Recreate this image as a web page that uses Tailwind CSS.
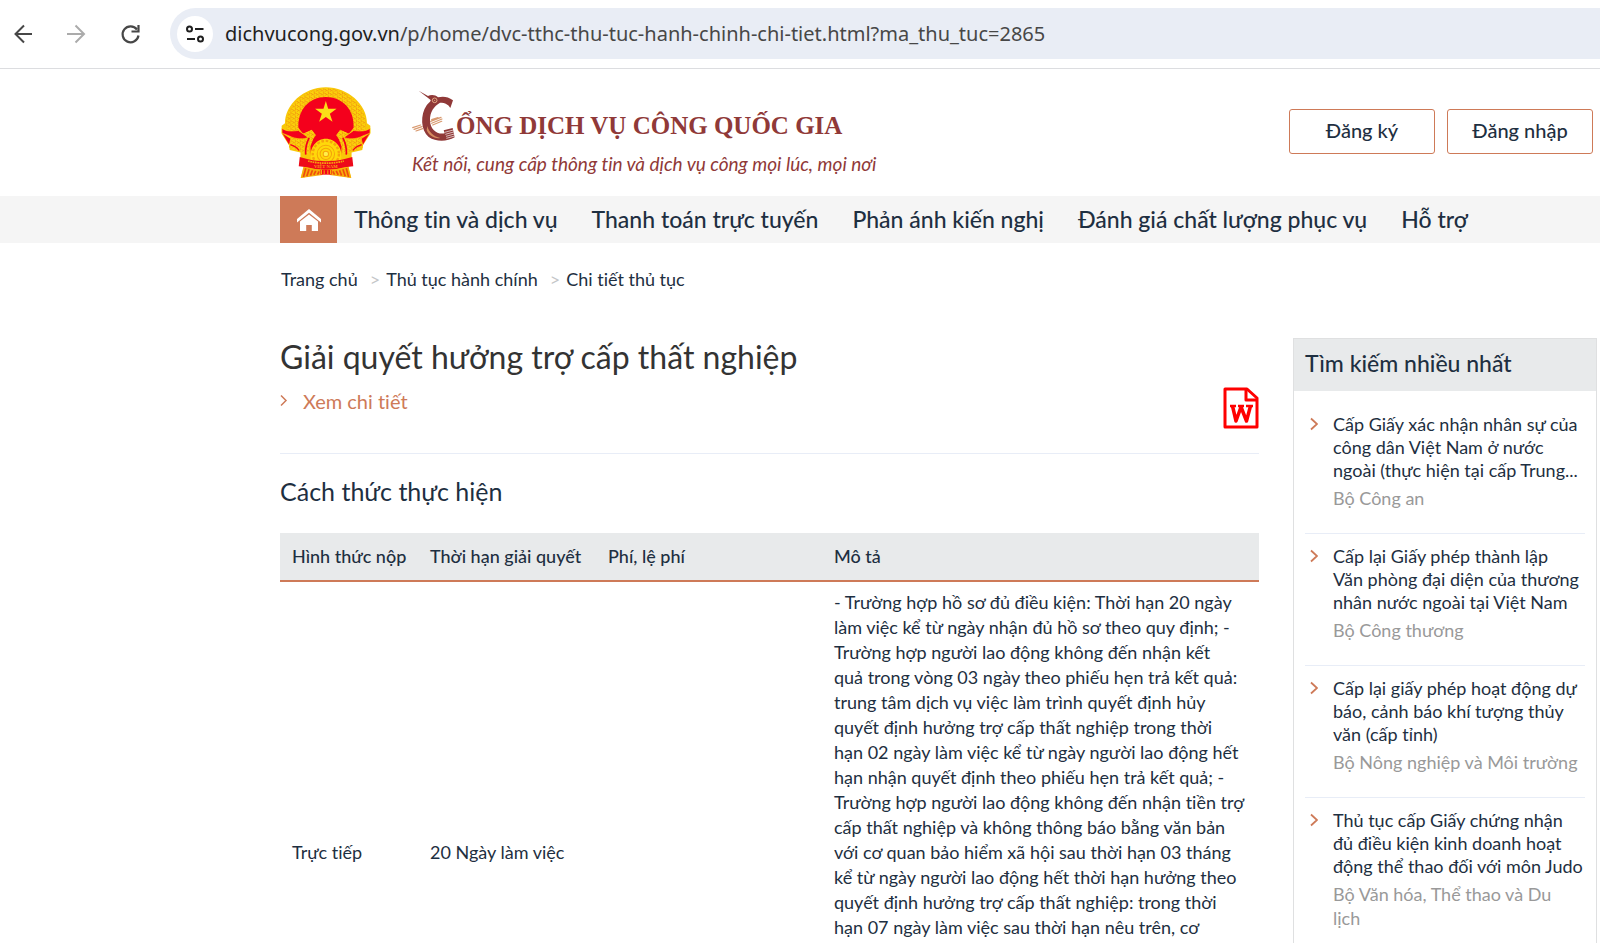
<!DOCTYPE html>
<html lang="vi">
<head>
  <meta charset="UTF-8">
  <meta name="viewport" content="width=device-width, initial-scale=1.0">
  <script src="https://cdn.jsdelivr.net/npm/@tailwindcss/browser@4"></script>
  <title>Cổng Dịch vụ công Quốc gia</title>
</head>
<body class="bg-white text-[#1e2f41] font-['Lato','Noto_Sans',sans-serif] text-[18px] [font-variant-ligatures:none] overflow-x-hidden">

  <!-- Browser bar -->
  <div class="flex items-center h-[69px] pt-2 pb-[9px] pl-3 border-b border-[#dcdde0]">
    <button aria-label="Back" class="w-6 h-6 mr-7">
      <svg viewBox="0 0 24 24" class="w-6 h-6" fill="none" stroke="#474747" stroke-width="2"><path d="M20 12H4M12 3.500L3.500 12L12 20.500"/></svg>
    </button>
    <button aria-label="Forward" class="w-6 h-6 mr-[30px]">
      <svg viewBox="0 0 24 24" class="w-6 h-6" fill="none" stroke="#ababab" stroke-width="2"><path d="M3 12H19M11.500 3.500L20 12L11.500 20.500"/></svg>
    </button>
    <button aria-label="Reload" class="w-6 h-6 mr-7">
      <svg viewBox="0 0 24 24" class="w-6 h-6" fill="none" stroke="#474747" stroke-width="2.200"><path d="M19 7.500A8 8 0 1 0 20.500 13.500"/><path d="M20.500 3V9.500H13.500"/></svg>
    </button>
    <div class="flex flex-1 items-center h-[51px] pl-[7px] rounded-l-full bg-[#e9edf5]">
      <button aria-label="Site information" class="flex items-center justify-center w-9 h-9 rounded-full bg-white">
        <svg viewBox="0 0 20 18" class="w-5 h-[18px]" fill="none" stroke="#1f1f1f" stroke-width="2"><circle cx="4.500" cy="4" r="2.500"/><path d="M10 4H18.500M2 14H10"/><circle cx="15.500" cy="14" r="2.500"/></svg>
      </button>
      <p class="ml-3 font-['Noto_Sans',sans-serif] text-[20px] text-[#474747] whitespace-nowrap"><span class="text-[#1f1f1f]">dichvucong.gov.vn</span>/p/home/dvc-tthc-thu-tuc-hanh-chinh-chi-tiet.html?ma_thu_tuc=2865</p>
    </div>
  </div>

  <!-- Header -->
  <header class="flex items-center h-[127px] pl-[281px] pr-[7px]">
    <svg viewBox="8 8 269 275" class="w-[90px] h-[92px] shrink-0" role="img" aria-label="Quốc huy Việt Nam">
      <defs>
        <pattern id="grain" width="14" height="12" patternUnits="userSpaceOnUse">
          <rect width="14" height="12" fill="#fbd50a"/>
          <path d="M0 3L5 6L0 9M7 0L12 3L7 6M7 9L12 11" stroke="#ee7d10" stroke-width="2" fill="none"/>
        </pattern>
      </defs>
      <path d="M142 9C75 9 20 62 20 116L10 124V148L32 182L34 196L66 204V224L76 242L67 280L142 264L218 280L209 242L219 224V204L251 196L253 182L275 148V124L265 116C265 62 209 9 142 9Z" fill="#f8c808"/>
      <path d="M142 12C78 12 24 64 23 118L33 190C55 196 70 199 78 210L102 200L110 166L175 166L183 200L207 210C215 199 230 196 252 190L262 118C261 64 206 12 142 12Z" fill="url(#grain)"/>
      <path d="M142 38C92 38 58 76 60 130L74 148L100 136L112 152L104 164L96 186L98 222H187L189 186L181 164L173 152L185 136L211 148L225 130C228 76 192 38 142 38Z" fill="#f4001c"/>
      <path d="M74 148L100 137L111 151L100 166L84 160ZM211 148L185 137L174 151L185 166L201 160Z" fill="url(#grain)"/>
      <path d="M11 131C25 143 46 139 60 138L88 158C80 166 50 164 34 155L11 146ZM274 131C260 143 239 139 225 138L197 158C205 166 235 164 251 155L274 146Z" fill="#f4001c" stroke="#fbd50a" stroke-width="2"/>
      <path d="M13 148L36 163L32 180ZM272 148L249 163L253 180Z" fill="#f4001c"/>
      <path d="M92 160C84 176 80 192 82 210M193 160C201 176 205 192 203 210" stroke="#f4001c" stroke-width="5" fill="none"/>
      <path d="M36 180C48 184 58 190 62 198M249 180C237 184 227 190 223 198" stroke="#f4001c" stroke-width="4" fill="none"/>
      <path d="M142 50L149 73L174 73L154 88L162 112L142 98L122 112L130 88L110 73L135 73Z" fill="#fbdf18"/>
      <path d="M98 226C90 188 116 163 142 163S195 188 187 226Z" fill="#ffd80a"/>
      <circle cx="142" cy="208" r="39" fill="none" stroke="#f6a40b" stroke-width="7" stroke-dasharray="8 5"/>
      <circle cx="142" cy="208" r="26" fill="none" stroke="#f5a40b" stroke-width="3"/>
      <circle cx="142" cy="208" r="17" fill="none" stroke="#f5a40b" stroke-width="3"/>
      <circle cx="142" cy="208" r="8" fill="#fff04b" stroke="#f5a40b" stroke-width="3"/>
      <path d="M64 217L86 223C120 232 164 232 198 223L221 217L224 245L198 248C164 258 120 258 86 248L61 245Z" fill="#ee0a1a"/>
      <path d="M89 229C120 238 164 238 196 229" fill="none" stroke="#f6a20e" stroke-width="5" stroke-dasharray="5 2"/>
      <path d="M76 248L92 251L132 256V271L67 280ZM209 248L193 251L153 256V271L218 280Z" fill="#f7ae0a"/>
      <path d="M82 251L75 277M92 254L85 275M102 257L96 273M112 259L106 271M122 260L117 270M203 251L210 277M193 254L200 275M183 257L189 273M173 259L179 271M163 260L168 270" stroke="#ef4c0c" stroke-width="5"/>
      <path d="M126 256H159V270H126Z" fill="#f4001c"/>
      <path d="M129 256V269M137 257V269M148 257V269M156 256V269" stroke="#f7ae0a" stroke-width="3"/>
      <text x="142" y="250" text-anchor="middle" fill="#f9a414" font-size="14" font-family="Liberation Serif, serif" font-weight="bold">VIỆT NAM</text>
    </svg>

    <div class="ml-[41px] flex-1 text-[#903938]">
      <h1 class="flex items-end h-[54px]">
        <svg viewBox="14 14 132 156" class="w-11 h-[52px] mb-[2px] shrink-0" fill="none" role="img" aria-label="C">
          <path d="M70 108L101 96M73 114L104 101M76 119L103 108M73 103L92 97M16 127L40 119M20 132L44 124M26 137L46 130" stroke="#d89a70" stroke-width="3.500" stroke-linecap="round"/>
          <path d="M34 16L62 32C70 27 84 27 92 36C108 32 122 34 137 45L129 68C124 58 114 52 98 52C80 62 67 80 68 106C69 132 88 148 112 144L109 135L136 128L142 156C118 170 86 170 64 155C40 136 38 88 58 60C65 51 70 50 70 44Z" fill="#903938"/>
          <circle cx="82" cy="45" r="7" stroke="#e4a884" stroke-width="3"/>
          <circle cx="82" cy="45" r="2" fill="#e4a884"/>
          <path d="M60 122C64 140 80 154 99 158C82 162 64 150 58 134Z" fill="#d58a5e"/>
          <path d="M112 141L138 134M114 147L139 140M116 153L141 146M117 159L142 152" stroke="#fff" stroke-width="2"/>
        </svg>
        <span class="font-['Liberation_Serif',serif] font-bold text-[25px] leading-[36px] whitespace-nowrap">ỔNG DỊCH VỤ CÔNG QUỐC GIA</span>
      </h1>
      <p class="italic text-[19px] leading-6 mt-2 whitespace-nowrap">Kết nối, cung cấp thông tin và dịch vụ công mọi lúc, mọi nơi</p>
    </div>

    <div class="flex gap-3 pb-[2px] text-[20px] font-medium">
      <button class="w-[146px] h-[45px] pb-1 border border-[#ce7a58] rounded-[3px]">Đăng ký</button>
      <button class="w-[146px] h-[45px] pb-1 border border-[#ce7a58] rounded-[3px]">Đăng nhập</button>
    </div>
  </header>

  <!-- Menu -->
  <nav class="flex items-center h-[47px] pl-[280px] bg-[#f5f5f5] text-[23px] font-medium whitespace-nowrap">
    <a href="#" aria-label="Trang chủ" class="flex items-center justify-center w-[57px] h-[47px] mr-[17px] shrink-0 bg-[#ce7a58]">
      <svg viewBox="0 0 24 24" class="w-6 h-6" fill="#fff"><path d="M12 1L24 11V14.500L12 4.800L0 14.500V11Z"/><path d="M12 6.500L21 13.500V23H14.800V17H9.200V23H3V13.500Z"/></svg>
    </a>
    <div class="flex gap-[34px]">
      <a href="#">Thông tin và dịch vụ</a>
      <a href="#">Thanh toán trực tuyến</a>
      <a href="#">Phản ánh kiến nghị</a>
      <a href="#">Đánh giá chất lượng phục vụ</a>
      <a href="#">Hỗ trợ</a>
    </div>
  </nav>

  <div class="flex items-center h-[73px] pl-[281px]">
    <a href="#">Trang chủ</a>
    <span class="ml-3 mr-[6px] text-[#c4c6c8]">&gt;</span>
    <a href="#">Thủ tục hành chính</a>
    <span class="ml-3 mr-[6px] text-[#c4c6c8]">&gt;</span>
    <a href="#">Chi tiết thủ tục</a>
  </div>

  <div class="flex items-start gap-[34px] pl-[280px] pr-[3px] pt-[22px]">
    <!-- Content -->
    <main class="flex-1">
      <div class="flex items-end justify-between h-[116px] pb-6 border-b border-[#e8edf7]">
        <div class="self-start">
          <h2 class="text-[32px] leading-[38px] text-[#333]">Giải quyết hưởng trợ cấp thất nghiệp</h2>
          <a href="#" class="flex items-center mt-[11px] text-[20px] leading-7 text-[#ce7a58]">
            <svg viewBox="0 0 8 14" class="w-2 h-[14px] mr-[15px]" fill="none" stroke="#ce7a58" stroke-width="1.500"><path d="M1 1.500L6 6.500L1 11.500"/></svg>
            Xem chi tiết
          </a>
        </div>
        <a href="#" aria-label="Tải tệp Word">
          <svg viewBox="0 0 36 42" class="w-9 h-[42px]" fill="none" stroke="#fe0000" stroke-width="3" stroke-linejoin="round"><path d="M2 2H24L34 11V40H2Z"/><path d="M23 2V13H34"/><path d="M7 19H13M15 19H21M23 19H30" stroke-width="2.500"/><path d="M9.500 19L13 34L18 20L23.500 34L27.500 19" stroke-width="3.500"/></svg>
        </a>
      </div>

      <h3 class="mt-[21px] mb-[25px] text-[25px] leading-[33px]">Cách thức thực hiện</h3>

      <table class="w-full table-fixed text-left">
        <thead class="bg-[#e8eaeb] border-b-2 border-[#ce7a58]">
          <tr class="h-12">
            <th class="w-[138px] pl-3 font-medium whitespace-nowrap">Hình thức nộp</th>
            <th class="w-[178px] pl-3 font-medium whitespace-nowrap">Thời hạn giải quyết</th>
            <th class="w-[226px] pl-3 font-medium whitespace-nowrap">Phí, lệ phí</th>
            <th class="pl-3 font-medium">Mô tả</th>
          </tr>
        </thead>
        <tbody>
          <tr class="h-[542px]">
            <td class="pl-3">Trực tiếp</td>
            <td class="pl-3">20 Ngày làm việc</td>
            <td class="pl-3"></td>
            <td class="pl-3 pt-2 align-top leading-[25px] whitespace-nowrap">
              - Trường hợp hồ sơ đủ điều kiện: Thời hạn 20 ngày<br>
              làm việc kể từ ngày nhận đủ hồ sơ theo quy định; -<br>
              Trường hợp người lao động không đến nhận kết<br>
              quả trong vòng 03 ngày theo phiếu hẹn trả kết quả:<br>
              trung tâm dịch vụ việc làm trình quyết định hủy<br>
              quyết định hưởng trợ cấp thất nghiệp trong thời<br>
              hạn 02 ngày làm việc kể từ ngày người lao động hết<br>
              hạn nhận quyết định theo phiếu hẹn trả kết quả; -<br>
              Trường hợp người lao động không đến nhận tiền trợ<br>
              cấp thất nghiệp và không thông báo bằng văn bản<br>
              với cơ quan bảo hiểm xã hội sau thời hạn 03 tháng<br>
              kể từ ngày người lao động hết thời hạn hưởng theo<br>
              quyết định hưởng trợ cấp thất nghiệp: trong thời<br>
              hạn 07 ngày làm việc sau thời hạn nêu trên, cơ
            </td>
          </tr>
        </tbody>
      </table>
    </main>

    <!-- Sidebar -->
    <aside class="w-[304px] min-h-[640px] shrink-0 border border-[#dfe0e1]">
      <h3 class="flex items-center h-[52px] pl-[11px] pb-[3px] bg-[#e8eaeb] text-[23px] font-medium">Tìm kiếm nhiều nhất</h3>
      <ul class="px-[11px] pt-[10px] leading-[23px] whitespace-nowrap">
        <li class="flex pt-3 pb-[23px]">
          <svg viewBox="0 0 8 14" class="w-2 h-[14px] ml-[5px] mr-[15px] mt-1 shrink-0" fill="none" stroke="#ce7a58" stroke-width="1.800"><path d="M1 1.500L7 7L1 12.500"/></svg>
          <div>
            <a href="#">Cấp Giấy xác nhận nhân sự của<br>công dân Việt Nam ở nước<br>ngoài (thực hiện tại cấp Trung...</a>
            <p class="mt-1 leading-6 text-[#999]">Bộ Công an</p>
          </div>
        </li>
        <li class="flex pt-[11px] pb-[23px] border-t border-[#e8edf7]">
          <svg viewBox="0 0 8 14" class="w-2 h-[14px] ml-[5px] mr-[15px] mt-1 shrink-0" fill="none" stroke="#ce7a58" stroke-width="1.800"><path d="M1 1.500L7 7L1 12.500"/></svg>
          <div>
            <a href="#">Cấp lại Giấy phép thành lập<br>Văn phòng đại diện của thương<br>nhân nước ngoài tại Việt Nam</a>
            <p class="mt-1 leading-6 text-[#999]">Bộ Công thương</p>
          </div>
        </li>
        <li class="flex pt-[11px] pb-[23px] border-t border-[#e8edf7]">
          <svg viewBox="0 0 8 14" class="w-2 h-[14px] ml-[5px] mr-[15px] mt-1 shrink-0" fill="none" stroke="#ce7a58" stroke-width="1.800"><path d="M1 1.500L7 7L1 12.500"/></svg>
          <div>
            <a href="#">Cấp lại giấy phép hoạt động dự<br>báo, cảnh báo khí tượng thủy<br>văn (cấp tỉnh)</a>
            <p class="mt-1 leading-6 text-[#999]">Bộ Nông nghiệp và Môi trường</p>
          </div>
        </li>
        <li class="flex pt-[11px] pb-[23px] border-t border-[#e8edf7]">
          <svg viewBox="0 0 8 14" class="w-2 h-[14px] ml-[5px] mr-[15px] mt-1 shrink-0" fill="none" stroke="#ce7a58" stroke-width="1.800"><path d="M1 1.500L7 7L1 12.500"/></svg>
          <div>
            <a href="#">Thủ tục cấp Giấy chứng nhận<br>đủ điều kiện kinh doanh hoạt<br>động thể thao đối với môn Judo</a>
            <p class="mt-1 leading-6 text-[#999]">Bộ Văn hóa, Thể thao và Du<br>lịch</p>
          </div>
        </li>
      </ul>
    </aside>
  </div>

</body>
</html>
